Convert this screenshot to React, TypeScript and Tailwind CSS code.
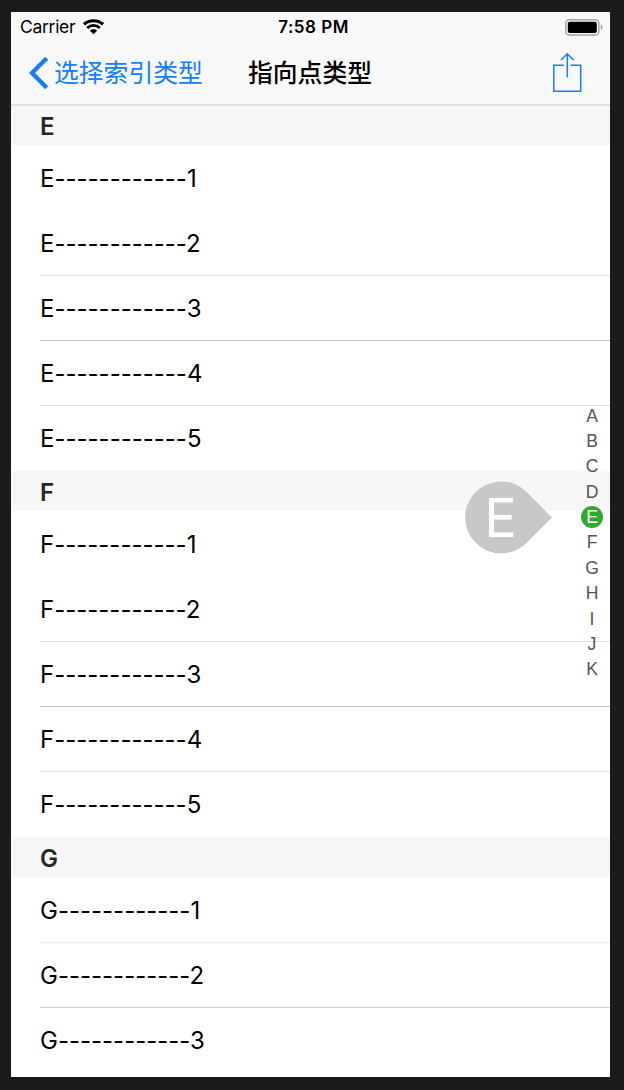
const sections = [
  { letter: "E", rows: [1, 2, 3, 4, 5] },
  { letter: "F", rows: [1, 2, 3, 4, 5] },
  { letter: "G", rows: [1, 2, 3] },
];

const indexLetters = ["A", "B", "C", "D", "E", "F", "G", "H", "I", "J", "K"];

function separatorColor(letter: string, row: number) {
  if (letter === "G") return row === 2 ? "border-[#e8e8e8]" : row === 3 ? "border-[#d0d0d0]" : "border-transparent";
  if (row === 1 || row === 2) return "border-transparent";
  if (row === 4) return "border-[#c8c8c8]";
  return "border-[#e0e0e0]";
}

function StatusBar() {
  return (
    <div className="flex h-[30px] items-center justify-between pl-[9px] pr-[7px] text-[17.5px] leading-[30px] text-black">
      <div className="flex w-[200px] items-center gap-[8px]">
        <span className="tracking-[-0.3px]">Carrier</span>
        <svg width="21" height="16" viewBox="0 0 21 16" fill="none">
          <path d="M1 5.3C6.2 .5 14.8 .5 20 5.3" stroke="#000" strokeWidth="3.1" />
          <path d="M4.2 9C7.8 5.6 13.2 5.6 16.8 9" stroke="#000" strokeWidth="2.8" />
          <path d="M10.5 15.2L6.9 11.7C8.9 9.9 12.1 9.9 14.1 11.7Z" fill="#000" />
        </svg>
      </div>
      <span className="whitespace-nowrap pl-[4px] text-[17px] font-semibold tracking-[0.5px]">7:58 PM</span>
      <div className="flex w-[200px] justify-end">
        <svg width="38" height="17" viewBox="0 0 38 17" fill="none">
          <rect x=".8" y=".8" width="33" height="15.2" rx="3.6" stroke="#a5a5a5" strokeWidth="1.5" />
          <rect x="2.8" y="2.8" width="29" height="11.2" rx="2" fill="#000" />
          <path d="M35.8 5.6C38.2 6.4 38.2 10.2 35.8 11Z" fill="#a5a5a5" />
        </svg>
      </div>
    </div>
  );
}

function NavBar() {
  return (
    <div className="grid h-[64px] grid-cols-[237px_125px_1fr] items-start border-b-2 border-[#e0e0e0] pt-[10px] font-['Inter','Noto_Sans_CJK_SC',sans-serif] text-[24.8px] leading-[42px]">
      <button className="flex items-start pl-[17px] text-[#147efb]">
        <svg className="mt-[5px] mr-[6px] shrink-0" width="20" height="32" viewBox="0 0 20 32" fill="none">
          <path d="M17.2 2.8L4 16L17.2 29.2" stroke="#147efb" strokeWidth="4.3" strokeLinecap="square" clipPath="inset(0)" />
        </svg>
        <span className="whitespace-nowrap">选择索引类型</span>
      </button>
      <h1 className="whitespace-nowrap font-medium text-black">指向点类型</h1>
      <button aria-label="Share" className="flex justify-end pr-[28px]">
        <svg width="30" height="40" viewBox="0 0 30 40" fill="none" stroke="#147efb" strokeWidth="1.5">
          <path d="M11.8 13.3H1.8V39.2H28.7V13.3H18.7M15.3 25.5V2M9 8L15.3 1.8L21.6 8" />
        </svg>
      </button>
    </div>
  );
}

export default function App() {
  return (
    <div className="h-[1090px] w-[624px] bg-[#1b1b1b] pt-[12px] pl-[11px] font-['Inter','Noto_Sans_CJK_SC',sans-serif]">
      <div className="relative h-[1065px] w-[599px] overflow-hidden bg-white">
        <header className="bg-[#f8f8f8]">
          <StatusBar />
          <NavBar />
        </header>
        <main>
          {sections.map(({ letter, rows }) => (
            <section key={letter}>
              <h2
                className={`flex items-center bg-[#f7f7f7] pl-[29px] text-[24px] font-semibold text-[#262626] ${
                  letter === "E" ? "h-[39px] pt-[2px]" : "h-[40px] pt-[4px]"
                }`}
              >
                {letter}
              </h2>
              {rows.map((row) => (
                <div
                  key={row}
                  className={`ml-[29px] flex items-start border-t pt-[17px] text-[24px] leading-[32px] text-black [font-feature-settings:'calt'_0] ${
                    row === 5 ? "h-[66px]" : "h-[65px]"
                  } ${separatorColor(letter, row)}`}
                >
                  <span className="whitespace-nowrap">{letter}------------{row}</span>
                </div>
              ))}
            </section>
          ))}
        </main>
        <nav className="absolute top-[391.1px] right-[7px] flex w-[22px] flex-col items-center font-['Liberation_Sans',sans-serif] text-[17.6px] text-[#555]">
          {indexLetters.map((letter) => (
            <div key={letter} className="flex h-[25.35px] items-center justify-center">
              <span
                className={`flex h-[22px] w-[22px] items-center justify-center rounded-full leading-[22px] ${
                  letter === "E" ? "bg-[#30a92f] text-white" : ""
                }`}
              >
                {letter}
              </span>
            </div>
          ))}
        </nav>
        <div className="absolute top-[469px] left-[453px] h-[73px] w-[89px]">
          <svg className="absolute inset-0" width="89" height="73" viewBox="0 0 89 73">
            <path d="M88 36.4L62.5 10.9A36 36 0 1 0 62.5 61.9Z" fill="#c8c8c8" />
          </svg>
          <span className="absolute top-0 left-0 w-[73px] text-center text-[54px] leading-[73px] font-normal text-white">E</span>
        </div>
      </div>
    </div>
  );
}
